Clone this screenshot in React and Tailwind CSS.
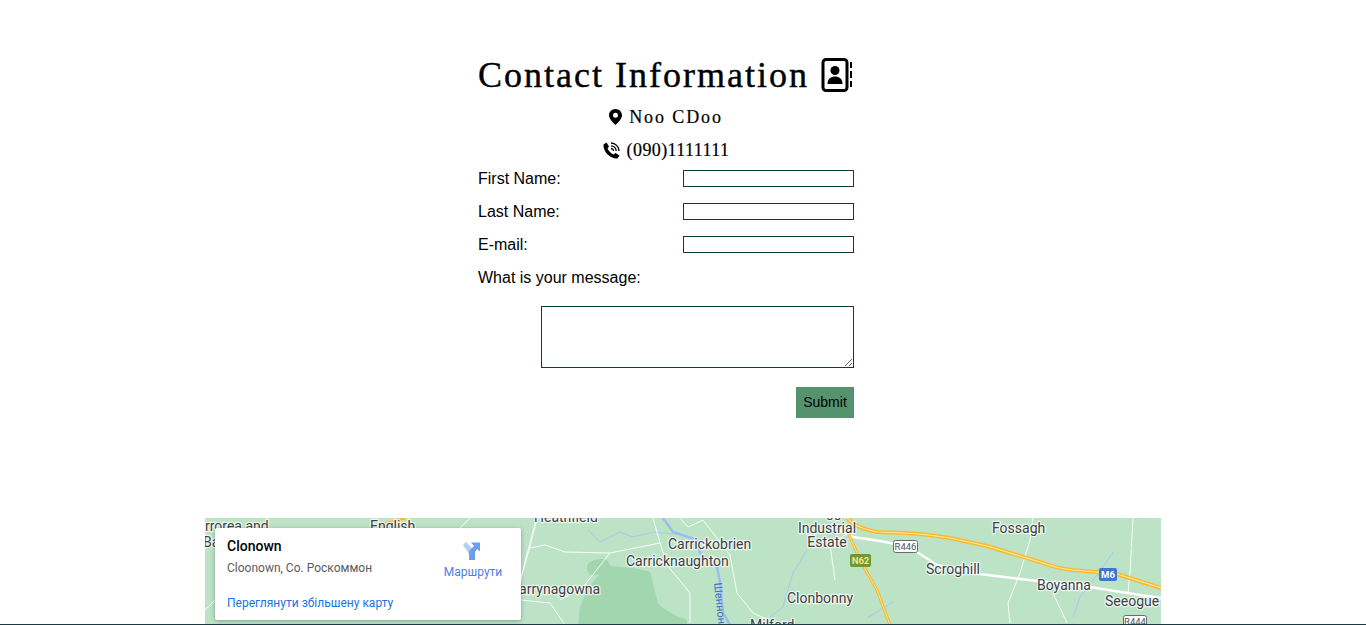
const Lbl = ({ x, y, a, c, fs = 14, children }) => (
  <text x={x} y={y} textAnchor={a} fontSize={fs} fontFamily="Roboto, sans-serif" fill={c || "#3c4043"} stroke="#ffffff" strokeOpacity="0.75" strokeWidth="2.5" paintOrder="stroke" strokeLinejoin="round">
    {children}
  </text>
);

const Shield = ({ x, y, w, h, label }) => (
  <g>
    <rect x={x} y={y} width={w} height={h} rx="2" fill="#fff" stroke="#6b6b6b" />
    <text x={x + w / 2} y={y + h - 3} textAnchor="middle" fontSize="9.5" fontFamily="Roboto, sans-serif" fill="#555">{label}</text>
  </g>
);

function MapCanvas() {
  const white = "#ffffff";
  const motor = "M847 518 Q855 528 877 532 L905 533 Q925 534 950 538 L987 546 L1040 562 Q1060 570 1085 571 L1117 574 L1161 588";
  const n62 = "M847 530 L860 560 L877 590 L890 625";
  return (
    <svg viewBox="205 518 956 107" className="block w-[956px] h-[107px]">
      <rect x="205" y="518" width="956" height="107" fill="#bce3c6" />
      <path d="M587 566 Q590 559 603 559 Q610 560 610 566 Q640 568 650 572 L658 603 Q665 612 687 620 L687 625 L578 625 L580 607 Q588 585 600 574 Q586 578 587 566 Z" fill="#a1d6ae" />
      <g fill="none" stroke="#a7c7f2" strokeWidth="1">
        <path d="M588 530 L600 542 L620 532 L633 537 L653 532 L673 534" />
        <path d="M807 550 L793 573 L783 607 L770 617" />
        <path d="M1113 552 L1103 567 L1080 597 L1073 617" />
        <path d="M893 602 L867 618" />
      </g>
      <path d="M663 518 L673 532 L697 540 L700 553 L717 567 L720 582 L723 613 L730 625" fill="none" stroke="#9dbdf0" strokeWidth="2.5" strokeLinejoin="round" />
      <g fill="none" stroke={white} strokeWidth="1" strokeOpacity="0.9">
        <path d="M653 518 L660 543 L610 553 L583 587 L560 600" />
        <path d="M530 548 L545 545 L565 552 L610 553" />
        <path d="M660 543 L667 565 L690 593 L690 623" />
        <path d="M680 518 L688 527 L703 520 L730 555 L737 593 L753 613 L780 625" />
        <path d="M521 600 L550 603 L565 625" />
        <path d="M1033 518 L1030 540 L1020 573 L1008 603 L1010 623" />
        <path d="M1133 518 L1130 573 L1128 593" />
        <path d="M1053 593 L1067 623" />
        <path d="M835 580 L830 545 L860 525" />
        <path d="M470 518 L460 528" />
        <path d="M205 610 L215 600" />
      </g>
      <path d="M1040 537 L1160 552" fill="none" stroke="#c9dfd0" strokeWidth="1" />
      <path d="M537 518 L520 582" fill="none" stroke={white} strokeWidth="1.5" />
      <path d="M840 530 L853 537 L880 541 L905 546 L917 552 L937 565 L980 574 L1037 581 L1090 587 L1127 593 L1161 598" fill="none" stroke={white} strokeWidth="2.5" strokeLinejoin="round" />
      <path d={n62} fill="none" stroke="#fbb92c" strokeWidth="3" />
      <path d={n62} fill="none" stroke="#fde293" strokeWidth="1" />
      <path d={motor} fill="none" stroke="#fbb92c" strokeWidth="4" strokeLinejoin="round" />
      <path d={motor} fill="none" stroke="#fde9a8" strokeWidth="1.2" strokeLinejoin="round" />
      <path d="M378 526 L405 518" fill="none" stroke="#fbb92c" strokeWidth="3" />

      <Lbl x={205} y={531}>rrorea and</Lbl>
      <Lbl x={203} y={547}>Ba</Lbl>
      <Lbl x={370} y={531}>English</Lbl>
      <Lbl x={534} y={522}>Heathfield</Lbl>
      <Lbl x={668} y={549}>Carrickobrien</Lbl>
      <Lbl x={626} y={566}>Carricknaughton</Lbl>
      <Lbl x={510} y={594}>Carrynagowna</Lbl>
      <Lbl x={787} y={603}>Clonbonny</Lbl>
      <Lbl x={750} y={630}>Milford</Lbl>
      <Lbl x={827} y={517} a="middle">Cregga</Lbl>
      <Lbl x={827} y={533} a="middle">Industrial</Lbl>
      <Lbl x={827} y={547} a="middle">Estate</Lbl>
      <Lbl x={992} y={533}>Fossagh</Lbl>
      <Lbl x={926} y={574}>Scroghill</Lbl>
      <Lbl x={1037} y={590}>Boyanna</Lbl>
      <Lbl x={1105} y={606}>Seeogue</Lbl>
      <text transform="translate(714 583) rotate(84)" fontSize="11" fontFamily="Roboto, sans-serif" fill="#3f6fc4">Шеннон</text>

      <Shield x={893.5} y={540.5} w={24} h={12} label="R446" />
      <Shield x={1123.5} y={615.5} w={23} h={12} label="R444" />
      <rect x="850" y="554" width="21" height="13" rx="2" fill="#6b9a2f" />
      <text x="860.5" y="564" textAnchor="middle" fontSize="9.5" fontWeight="700" fontFamily="Roboto, sans-serif" fill="#fde293">N62</text>
      <rect x="1099" y="568" width="18" height="13" rx="2" fill="#3b78d0" />
      <text x="1108" y="578" textAnchor="middle" fontSize="9.5" fontWeight="700" fontFamily="Roboto, sans-serif" fill="#fff">M6</text>
    </svg>
  );
}

function Field({ label }) {
  return (
    <div className="flex justify-between items-start h-[33px]">
      <label className="text-base leading-[18px]">{label}</label>
      <input type="text" className="w-[171px] h-[17px] border border-[#0f3d2e] bg-white" />
    </div>
  );
}

export default function App() {
  return (
    <div className="relative h-[625px] overflow-hidden bg-white text-black font-['Liberation_Sans',Arial,sans-serif]">
      <div className="ml-[478px] w-[376px] pt-[54px]">
        <h1 className="flex items-center justify-between h-[42px] font-['Liberation_Serif',serif] text-[36px] leading-[42px] tracking-[2px] [-webkit-text-stroke:0.4px_#000] whitespace-nowrap">
          <span>Contact Information</span>
          <svg width="32" height="36" viewBox="0 0 32 36" className="shrink-0 mr-[1px]">
            <rect x="2" y="2.5" width="24" height="31" rx="3" fill="none" stroke="#000" strokeWidth="3" />
            <circle cx="14" cy="13.5" r="4.5" fill="#000" />
            <path d="M6.5 27 C6.5 21.5 10 19.5 14 19.5 C18 19.5 21.5 21.5 21.5 27 Z" fill="#000" />
            <rect x="29" y="5" width="2" height="6" fill="#000" />
            <rect x="29" y="14" width="2" height="7" fill="#000" />
            <rect x="29" y="24" width="2" height="6" fill="#000" />
          </svg>
        </h1>
        <p className="flex items-center justify-center gap-[7px] h-[32px] mt-[5px] font-['Liberation_Serif',serif] text-[18px] tracking-[1.9px] [-webkit-text-stroke:0.2px_#000]">
          <svg width="13" height="16" viewBox="0 0 13 16">
            <path fillRule="evenodd" d="M6.5 0 C10 0 13 2.8 13 6.2 C13 10 9 13.5 6.5 16 C4 13.5 0 10 0 6.2 C0 2.8 3 0 6.5 0 Z M6.5 3.8 A2.5 2.5 0 1 0 6.5 8.8 A2.5 2.5 0 1 0 6.5 3.8 Z" fill="#000" />
          </svg>
          <span>Noo CDoo</span>
        </p>
        <p className="flex items-center justify-center gap-[7px] h-[33px] pt-[1px] font-['Liberation_Serif',serif] text-[18px] tracking-[0.4px] [-webkit-text-stroke:0.2px_#000]">
          <svg width="17" height="17" viewBox="0 0 17 17">
            <path d="M3.5 0.5 L6 4.5 L4.5 6.5 C5.5 9 8 11.5 10.5 12.5 L12.5 11 L16.5 13.5 L14.5 16.5 C7 17 0 9.5 0.5 2.5 Z" fill="#000" />
            <g fill="none" stroke="#000" strokeWidth="1.3">
              <path d="M8 1 A8 8 0 0 1 16 9" />
              <path d="M8 3.8 A5.2 5.2 0 0 1 13.2 9" />
              <path d="M8 6.5 A2.5 2.5 0 0 1 10.5 9" />
            </g>
          </svg>
          <span style={{ fontVariantNumeric: "oldstyle-nums" }}>(090)1111111</span>
        </p>
        <form className="mt-[4px]">
          <Field label="First Name:" />
          <Field label="Last Name:" />
          <Field label="E-mail:" />
          <div className="text-base leading-[18px] h-[37px]">What is your message:</div>
          <div className="flex justify-end">
            <textarea className="block w-[313px] h-[62px] border border-[#0f3d2e] bg-white resize-y" />
          </div>
          <div className="flex justify-end mt-[19px]">
            <button type="button" className="w-[58px] h-[31px] bg-[#55936e] text-[14px] text-black">Submit</button>
          </div>
        </form>
      </div>

      <div className="absolute left-0 top-[518px] w-full">
        <div className="relative ml-[205px] w-[956px] h-[107px]">
          <MapCanvas />
          <div className="absolute left-[10px] top-[10px] w-[306px] h-[92px] bg-white rounded-[2px] shadow-[0_1px_4px_rgba(0,0,0,0.3)] font-['Roboto',sans-serif]">
            <div className="absolute left-[12px] top-[9px] text-[14px] leading-[18px] font-medium text-black">Clonown</div>
            <div className="absolute left-[12px] top-[32px] text-[12px] leading-[16px] text-[#5b5b5b]">Cloonown, Co. Роскоммон</div>
            <div className="absolute left-[12px] top-[67px] text-[12px] leading-[16px] text-[#1a73e8]">Переглянути збільшену карту</div>
            <div className="absolute left-[214px] top-[14px] w-[88px] flex flex-col items-center">
              <svg width="18" height="18" viewBox="0 0 18 18" className="mr-[2px]">
                <path d="M0 3 L3 0 L12 9 L6 12 Z" fill="#b6cff5" />
                <path d="M6 18 L6 9 L11 4 L8 0.5 L17 0.5 L17 9.5 L14 7 L12 10 L12 18 Z" fill="#6d9eeb" />
              </svg>
              <div className="mt-[4px] text-[12px] leading-[16px] text-[#4d7fe3]">Маршрути</div>
            </div>
          </div>
        </div>
      </div>
      <div className="absolute left-0 right-0 bottom-0 h-px bg-[#17393f]" />
    </div>
  );
}
